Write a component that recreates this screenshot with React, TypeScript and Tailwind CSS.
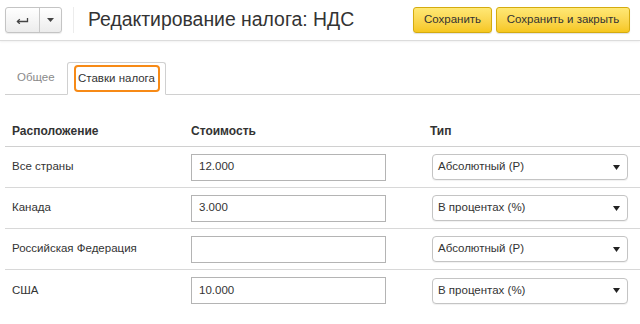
import React from "react";

const rows = [
  { name: "Все страны", value: "12.000", type: "Абсолютный (Р)" },
  { name: "Канада", value: "3.000", type: "В процентах (%)" },
  { name: "Российская Федерация", value: "", type: "Абсолютный (Р)" },
  { name: "США", value: "10.000", type: "В процентах (%)" },
];

export default function App() {
  return (
    <div
      className="w-[640px] h-[324px] bg-white text-[#333] overflow-hidden"
      style={{ fontFamily: '"Liberation Sans", Arial, sans-serif' }}
    >
      {/* Header */}
      <div className="h-[41px] flex items-center pl-[5px] pr-[10px] border-b border-[#dcdcdc] shadow-[0_1px_2px_rgba(0,0,0,0.06)]">
        <div className="flex h-[26px] w-[57px] rounded-[3px] border border-[#c4c4c4] bg-gradient-to-b from-[#ffffff] to-[#ececec] shadow-[0_1px_1px_rgba(0,0,0,0.08)]">
          <div className="w-[34px] flex items-center justify-center border-r border-[#c8c8c8]">
            <svg width="13" height="7" viewBox="0 0 13 7" fill="none" stroke="#444" strokeWidth="1.3">
              <path d="M1.5 4.5 H11.5 V1" />
              <path d="M3.8 2.2 L1.4 4.5 L3.8 6.8" />
            </svg>
          </div>
          <div className="flex-1 flex items-center justify-center">
            <svg width="7" height="4" viewBox="0 0 7 4">
              <path d="M0 0 H7 L3.5 4 Z" fill="#444" />
            </svg>
          </div>
        </div>
        <div className="ml-[11px] w-px h-[26px] bg-[#ececec]" />
        <div className="ml-[14px] text-[19.4px] leading-none text-[#333]">Редактирование налога: НДС</div>
        <div className="ml-auto flex gap-[4px]">
          <button className="h-[26px] w-[79px] rounded-[3px] border border-[#d4ab0f] bg-gradient-to-b from-[#ffe874] to-[#f6c71c] text-[11.5px] text-[#333] shadow-[0_1px_1px_rgba(0,0,0,0.12)]">
            Сохранить
          </button>
          <button className="h-[26px] w-[134px] rounded-[3px] border border-[#d4ab0f] bg-gradient-to-b from-[#ffe874] to-[#f6c71c] text-[11.5px] text-[#333] shadow-[0_1px_1px_rgba(0,0,0,0.12)]">
            Сохранить и закрыть
          </button>
        </div>
      </div>

      {/* Tabs */}
      <div className="mt-[22px] ml-[5px] flex items-end border-b border-[#d0d0d0] h-[32px]">
        <div className="h-[32px] w-[62px] flex items-center pl-[12px] text-[11.5px] text-[#8a8a8a]">Общее</div>
        <div className="h-[33px] -mb-px w-[99px] border border-[#d0d0d0] border-b-white bg-white rounded-t-[3px] flex justify-center pt-[2px]">
          <div className="h-[27px] w-[86px] rounded-[4px] border-2 border-[#f78a16] flex items-center justify-center text-[11.5px] text-[#333]">
            Ставки налога
          </div>
        </div>
      </div>

      {/* Table */}
      <div className="ml-[5px] mt-[20px]">
        <div className="h-[32px] flex items-center border-b border-[#d0d0d0] text-[12px] font-bold text-[#333]">
          <div className="w-[186px] pl-[7px]">Расположение</div>
          <div className="w-[239px]">Стоимость</div>
          <div>Тип</div>
        </div>
        {rows.map((r, i) => (
          <div
            key={r.name}
            className={`h-[41px] flex items-center text-[11.5px] text-[#333] ${i < rows.length - 1 ? "border-b border-[#d8d8d8]" : ""}`}
          >
            <div className="w-[186px] pl-[7px]">{r.name}</div>
            <div className="w-[241px]">
              <div className="h-[27px] w-[195px] border border-[#b4b4b4] bg-white flex items-center pl-[7px]">
                {r.value}
              </div>
            </div>
            <div className="h-[26px] w-[196px] rounded-[4px] border border-[#c4c4c4] bg-white flex items-center pl-[5px] pr-[7px] shadow-[0_1px_1px_rgba(0,0,0,0.06)]">
              <span>{r.type}</span>
              <svg className="ml-auto" width="7" height="5" viewBox="0 0 7 5">
                <path d="M0 0 H7 L3.5 5 Z" fill="#222" />
              </svg>
            </div>
          </div>
        ))}
      </div>
    </div>
  );
}
